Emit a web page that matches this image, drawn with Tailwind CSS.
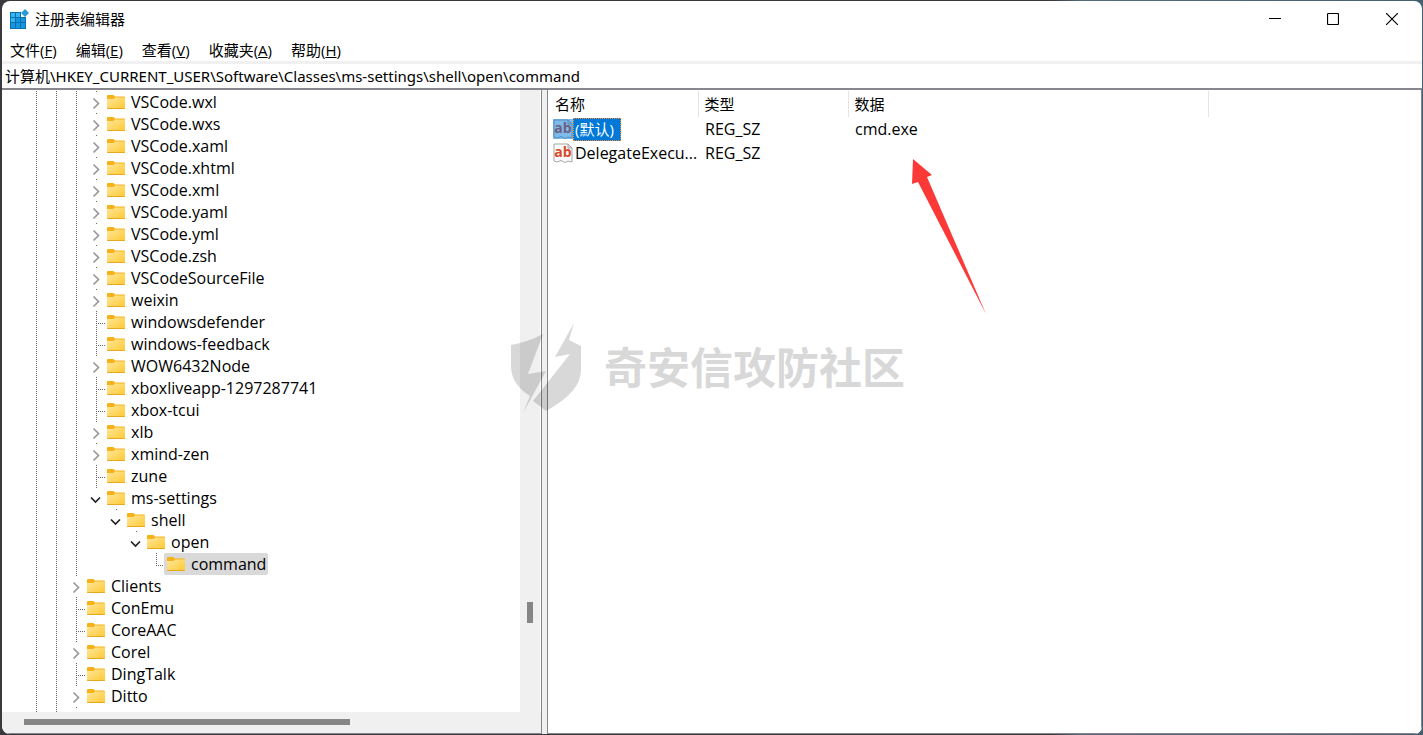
<!DOCTYPE html>
<html lang="zh-CN">
<head>
<meta charset="utf-8">
<meta name="viewport" content="width=device-width, initial-scale=1">
<title>注册表编辑器</title>
<script src="https://cdn.jsdelivr.net/npm/@tailwindcss/browser@4"></script>
</head>
<body class="h-screen overflow-hidden bg-[linear-gradient(90deg,#3a3a3e_0%,#3a3a3e_74%,#566b7a_76%,#44606f_100%)] pt-px pr-px pb-px pl-0.5 font-['Open_Sans','Noto_Sans_CJK_SC',sans-serif] text-[15px] leading-[22px] text-black">
<svg class="absolute size-0" aria-hidden="true">
  <defs>
    <linearGradient id="fold" x1="0" y1="0" x2="1" y2="1"><stop offset="0" stop-color="#ffe69a"/><stop offset="1" stop-color="#ffc933"/></linearGradient>
    <symbol id="folder" viewBox="0 0 18 14"><path d="M0 1q0-1 1-1h5.500l1.500 1.500h9q1 0 1 1V8H0z" fill="#f7b219"/><path d="M0 4h6.500l1.500-1.500h10V13q0 1-1 1H1q-1 0-1-1z" fill="url(#fold)"/><path d="M0 13h18v.2q0 .8-1 .8H1q-1 0-1-.8z" fill="#e9a820"/></symbol>
    <symbol id="sz" viewBox="0 0 20 20"><path d="M1 1h14l4 4v14l-4-1-3 1.500-4-2-4 1.500-3-1z" fill="#fdfdfd" stroke="#a5a5a5"/><path d="M15 1v4h4z" fill="#e2e2e2" stroke="#a5a5a5"/></symbol>
  </defs>
</svg>
<div class="relative flex h-full flex-col overflow-hidden rounded-lg bg-white">
  <header class="flex h-9 shrink-0 items-center">
    <svg class="ml-[7px] size-5" viewBox="0 0 20 20" aria-hidden="true"><path d="M1 3h11v5h5v12H1z" fill="#0a6fb5"/><path d="M2 4h4v4H2zM7 4h4v4H7zM2 9h4v4H2z" fill="#35b7ee"/><path d="M7 9h4v4H7zM12 9h4v4h-4zM2 14h4v5H2zM7 14h4v5H7zM12 14h4v5h-4z" fill="#1397da"/><path d="M16 0l4 4-4 4-4-4z" fill="#2a9bd6"/></svg>
    <h1 class="ml-[6px] flex-1 text-[15px]">注册表编辑器</h1>
    <button aria-label="最小化" class="flex h-9 w-[58px] items-center justify-center"><svg class="h-3 w-3" viewBox="0 0 12 12"><path d="M0 5.500h12" stroke="#000"/></svg></button>
    <button aria-label="最大化" class="flex h-9 w-[58px] items-center justify-center"><svg class="h-3 w-3" viewBox="0 0 12 12"><rect x=".5" y=".5" width="11" height="11" rx="1" fill="none" stroke="#000" stroke-width="1.200"/></svg></button>
    <button aria-label="关闭" class="flex h-9 w-[60px] items-center justify-center"><svg class="h-3 w-3" viewBox="0 0 12 12"><path d="M0 0l12 12M12 0L0 12" stroke="#000" stroke-width="1.200"/></svg></button>
  </header>
  <nav class="flex h-6 shrink-0 items-center gap-[19px] pt-0.5 pl-2">
    <button>文件(<u>F</u>)</button><button>编辑(<u>E</u>)</button><button>查看(<u>V</u>)</button><button>收藏夹(<u>A</u>)</button><button>帮助(<u>H</u>)</button>
  </nav>
  <input aria-label="地址" class="h-[29px] w-full shrink-0 border-t-3 border-b-2 border-t-[#f0f0f0] border-b-[#88868c] pb-px pl-[3px] font-['Noto_Sans','Noto_Sans_CJK_SC',sans-serif] text-[15px] outline-none" value="计算机\HKEY_CURRENT_USER\Software\Classes\ms-settings\shell\open\command">
  <main class="flex min-h-0 flex-1 bg-[#f0f0f0]">
    <section class="flex w-[540px] shrink-0 flex-col border-r border-b border-[#85838c]">
      <div class="flex min-h-0 flex-1">
        <ul id="tree" class="min-w-0 flex-1 overflow-hidden bg-white pt-px pl-6 text-base leading-[22px]"></ul>
        <div class="w-5 shrink-0 pt-[512px] pl-[7px]"><div class="h-[21px] w-1.5 bg-[#868686]"></div></div>
        <div class="w-px bg-white"></div>
      </div>
      <div class="h-[21px] shrink-0 pt-[7px] pl-[22px]"><div class="h-1.5 w-[326px] bg-[#868686]"></div></div>
    </section>
    <section class="ml-[5px] min-w-0 flex-1 border-x border-b border-[#85838c] bg-white pt-px">
      <table class="w-full table-fixed border-collapse text-left">
        <colgroup><col class="w-[150px]"><col class="w-[150px]"><col class="w-[360px]"><col></colgroup>
        <thead><tr class="h-[26px]"><th class="border-r border-[#e5e5e5] pl-[7px] font-normal">名称</th><th class="border-r border-[#e5e5e5] pl-1.5 font-normal">类型</th><th class="border-r border-[#e5e5e5] pl-1.5 font-normal">数据</th><th></th></tr></thead>
        <tbody class="text-base leading-[22px]">
          <tr class="h-6"><td class="p-0 pl-[5px]"><div class="flex items-center"><span class="relative size-5 shrink-0"><svg class="size-5" viewBox="0 0 20 20" aria-hidden="true"><use href="#sz"/></svg><b class="absolute inset-0 text-center text-[14px] leading-[18px] text-[#d9492a]">ab</b><i class="absolute inset-0 bg-[#0078d7]/50"></i></span><span class="h-[23px] border border-dotted border-[#ff8728] bg-[#0078d7] pr-1.5 pl-px text-[15px] leading-5 text-white">(默认)</span></div></td><td class="p-0 pl-[7px]">REG_SZ</td><td class="p-0 pl-[7px]">cmd.exe</td><td></td></tr>
          <tr class="h-6"><td class="p-0 pl-[5px]"><div class="flex items-center"><span class="relative size-5 shrink-0"><svg class="size-5" viewBox="0 0 20 20" aria-hidden="true"><use href="#sz"/></svg><b class="absolute inset-0 text-center text-[14px] leading-[18px] text-[#d9492a]">ab</b></span><span class="pl-0.5">DelegateExecu...</span></div></td><td class="p-0 pl-[7px]">REG_SZ</td><td></td><td></td></tr>
        </tbody>
      </table>
    </section>
  </main>
  <svg class="pointer-events-none absolute top-[158px] left-[908px] h-[156px] w-[78px]" viewBox="0 0 78 156" aria-hidden="true"><path d="M3 0L22 16l-5 2L76 155 8 23l-6 2z" fill="#fb3a38"/></svg>
  <div class="pointer-events-none absolute top-[321px] left-[506px] flex items-center gap-[22px] opacity-15">
    <svg class="h-[92px] w-[74px]" viewBox="0 0 74 92" aria-hidden="true"><path d="M3 23Q20 20 35 12L20 52l18-3L15 91l7-17Q3 62 3 44zM66 1l-5 17 12 6v24Q73 70 38 89L25 79 62 32l-15 3z" fill="#000"/></svg>
    <span class="text-[43px] leading-[60px] font-bold">奇安信攻防社区</span>
  </div>
</div>
<script>
// [depth, state, name]; state: "+" collapsed, "-" expanded, "" leaf
const rows = [
  [3,"+","VSCode.wxl"],[3,"+","VSCode.wxs"],[3,"+","VSCode.xaml"],[3,"+","VSCode.xhtml"],[3,"+","VSCode.xml"],
  [3,"+","VSCode.yaml"],[3,"+","VSCode.yml"],[3,"+","VSCode.zsh"],[3,"+","VSCodeSourceFile"],[3,"+","weixin"],
  [3,"","windowsdefender"],[3,"","windows-feedback"],[3,"+","WOW6432Node"],[3,"","xboxliveapp-1297287741"],[3,"","xbox-tcui"],
  [3,"+","xlb"],[3,"+","xmind-zen"],[3,"","zune"],[3,"-","ms-settings"],[4,"-","shell"],[5,"-","open"],[6,"","command"],
  [2,"+","Clients"],[2,"","ConEmu"],[2,"","CoreAAC"],[2,"+","Corel"],[2,"","DingTalk"],[2,"+","Ditto"]
];
const rail = '<path d="M10.500 0v22" stroke="#666" stroke-dasharray="1 1"/>';
const cell = (inner, cls) => `<svg class="${cls}" viewBox="0 0 20 22" aria-hidden="true">${inner}</svg>`;
const wide = "h-[22px] w-5 shrink-0";
document.getElementById("tree").innerHTML = rows.map(([depth, state, name]) => {
  let html = "";
  // below ms-settings the innermost sibling rail has ended
  for (let i = 0; i < depth; i++) html += cell(i < 3 ? rail : "", wide);
  const mark = state === "+" ? '<path d="M10.500 0v1" stroke="#666"/><path d="M7.500 7.500l5 5-5 5" fill="none" stroke="#999" stroke-width="1.700"/>'
    : state === "-" ? '<path d="M10.500 0v1" stroke="#666"/><path d="M5 10.500l4.500 4.500L14 10.500" fill="none" stroke="#222" stroke-width="1.700"/>'
    : (name === "command" ? '<path d="M10.500 0v13" stroke="#666" stroke-dasharray="1 1"/>' : rail) + '<path d="M12 12.500h7" stroke="#666" stroke-dasharray="1 1"/>';
  html += cell(mark, wide);
  const on = name === "command" ? "bg-[#d9d9d9]" : "";
  return `<li class="flex h-[22px]">${html}<button class="-ml-0.5 flex items-center gap-1.5 rounded-xs pr-0.5 pl-[3px] whitespace-nowrap ${on}"><svg class="h-3.5 w-[18px]" viewBox="0 0 18 14" aria-hidden="true"><use href="#folder"/></svg>${name}</button></li>`;
}).join("") + `<li class="flex h-[5px] overflow-hidden">${cell(rail, wide)}${cell(rail, wide)}${cell('<path d="M10.500 0v1" stroke="#666"/>', wide)}</li>`;
</script>
</body>
</html>
